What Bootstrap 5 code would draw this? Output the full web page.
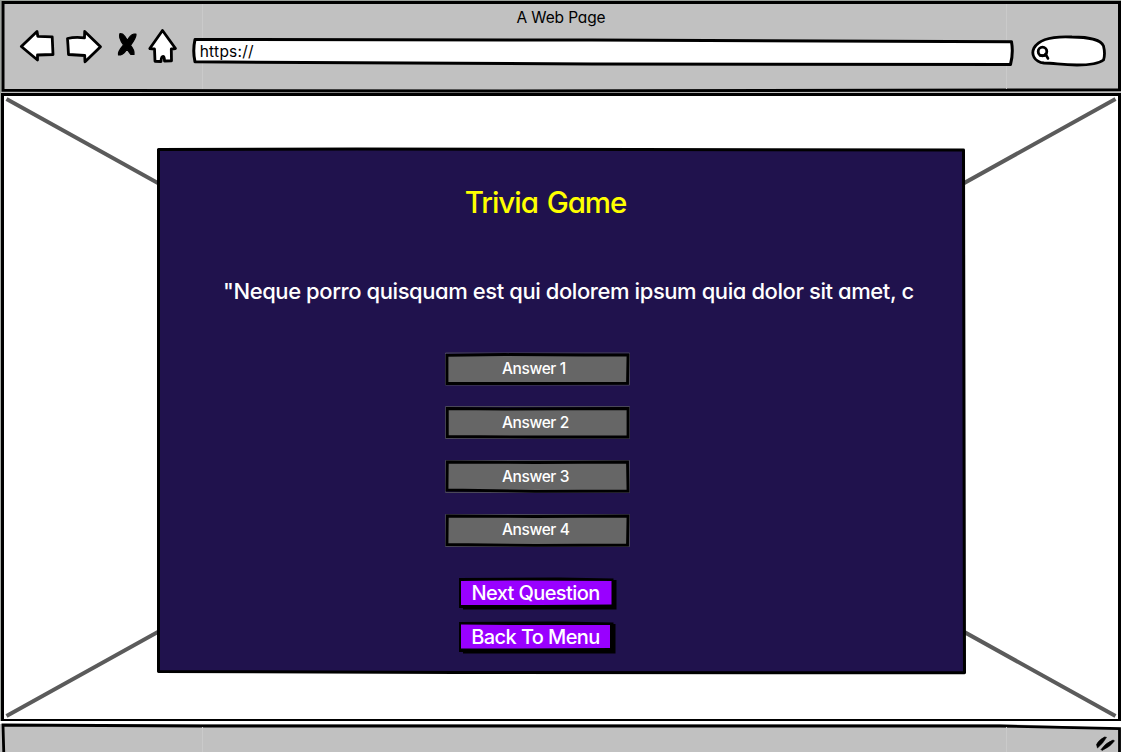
<!DOCTYPE html>
<html lang="en">
<head>
<meta charset="utf-8">
<meta name="viewport" content="width=device-width, initial-scale=1">
<title>A Web Page</title>
<link href="https://cdn.jsdelivr.net/npm/bootstrap@5.3.0/dist/css/bootstrap.min.css" rel="stylesheet">
<style>
  body { font-family: Inter, "Liberation Sans", sans-serif; font-feature-settings: "cv11"; color: #000; background: #fff; }
  .sketch { position: absolute; left: 0; top: 0; display: block; overflow: visible; }
  .chrome-bar { height: 93px; background: #c1c1c1; }
  .page-title { font-size: 15.5px; line-height: 20px; padding-top: 8px; padding-left: 1px; height: 28px; letter-spacing: -.15px; }
  .tool-row { height: 40px; padding: 0 13px 0 19px; }
  .address { width: 822px; height: 30px; margin: 9px 0 0 13px; }
  .address span { font-size: 15.5px; line-height: 29px; padding-left: 8px; letter-spacing: .25px; }
  .search-box { width: 78px; height: 34px; margin: 6px 0 0 18px; }
  .canvas { height: 628px; }
  .status-bar { height: 31px; background: #c1c1c1; }
  .game { width: 809px; height: 527px; margin-left: 157px; margin-top: 54px; }
  .game-inner { width: 761px; }
  .game-title { font-size: 29.5px; line-height: 36px; color: #ff0; margin: 37px 0 0 16px; letter-spacing: -1.05px; word-spacing: 2px; font-weight: 500; }
  .question { font-size: 22px; line-height: 28px; color: #fff; margin: 57px 0 0 66px; align-self: flex-start; white-space: nowrap; font-weight: 500; letter-spacing: -.42px; }
  .answers { margin-top: 47px; gap: 21px; }
  .answer { width: 185px; height: 33px; line-height: 31px; color: #fff; font-size: 15.5px; letter-spacing: -.4px; font-weight: 500; padding: 0 0 0 57px; text-align: left; border: 0; background: none; }
  .actions { margin-top: 31px; gap: 12px; }
  .action { width: 158px; height: 32px; line-height: 28px; color: #fff; font-size: 20px; letter-spacing: -.6px; font-weight: 500; padding: 0 4px 2px 0; border: 0; background: none; }
  .label { position: relative; }
</style>
</head>
<body>
<div class="d-flex flex-column vh-100 overflow-hidden">
  <header class="chrome-bar position-relative flex-shrink-0">
    <svg class="sketch" width="1121" height="93" fill="none" stroke="#000">
      <path d="M0 .5H1121M.5 0V93" stroke="#9da39d"/>
      <path d="M3 2.500L60 2.500L560 2.500L1119.500 2.500V89.800L500 91L3 90.300Z" stroke-width="3"/>
      <path d="M202.500 4V89M1006.500 4V89" stroke="#cacaca"/>
    </svg>
    <div class="page-title label text-center">A Web Page</div>
    <div class="tool-row d-flex align-items-start label">
      <svg width="160" height="40" fill="#fff" stroke="#000" stroke-width="2.800" stroke-linejoin="round" stroke-linecap="round">
        <path d="M2.300 18.500L18 3.500L18.800 8.300L33.200 8.800L34 26.500L18.500 27L18.500 32Z"/>
        <path d="M48.500 10.500Q56 8.500 65.500 9.800L65.700 3.500L81.500 18.800L66 33.700L65.700 27.500L49.500 26.500Q49 17 48.500 10.500Z"/>
        <path d="M143.500 2.500L130.800 20.500L135.500 21L136 33.300L142 33.500Q142.300 28.500 144 28.500Q145.500 28.500 145.500 33L152.500 32.800L152.300 21L156.500 20.500Z"/>
        <path d="M101 5.500L103.500 6Q106 8 108.500 12.500Q111 7 115 6H117Q117.500 9 111.500 17.500Q115.500 22 115 26.500H112Q110.500 25 108 21Q105 26 101.500 27H99.500Q98.500 24 104.500 17Q99 9 101 5.500Z" fill="#000" stroke-width="1.200"/>
      </svg>
      <div class="address position-relative">
        <svg class="sketch" width="822" height="30"><path d="M3 2.500L400 3L819.500 4.700Q821.500 16 818.500 27.500L400 27L3 24.800Q.5 14 3 2.500Z" fill="#fff" stroke="#000" stroke-width="3" stroke-linejoin="round"/></svg>
        <span class="label d-block">https://</span>
      </div>
      <svg class="search-box" fill="#fff" stroke="#000" stroke-width="2.800">
        <path d="M14 29C4 28 1 20 4 14C9 5 22 2 42 3C58 3 71 6 73.500 12Q75.500 20 73.500 26Q67 31 47 31C31 31 25 29 14 29Z"/>
        <circle cx="12.500" cy="17.500" r="4.300" stroke-width="2.800"/><path d="M15.500 20L18 24.500M10 21.500H15" stroke-width="2.600" stroke-linecap="round"/>
      </svg>
    </div>
  </header>

  <main class="canvas position-relative flex-shrink-0">
    <svg class="sketch" width="1121" height="628" fill="none">
      <path d="M0 .5H1121M.5 0V628M0 627.500H1121" stroke="#a5aaa5"/>
      <path d="M6.500 6L561 314L1115.500 6M6.500 623L561 315L1115.500 623" stroke="#5b5b5b" stroke-width="4"/>
      <path d="M2.500 1.500H1119.500V627.500H2.500Z" stroke="#000" stroke-width="3"/>
    </svg>
    <section class="d-flex">
      <div class="game position-relative">
        <svg class="sketch" width="809" height="527"><path d="M1.500 2.500L200 2L806.500 3L807.500 525.800L300 525.500L1.500 524.500Z" fill="#20124d" stroke="#000" stroke-width="3" stroke-linejoin="round"/></svg>
        <div class="game-inner label d-flex flex-column align-items-center">
          <h1 class="game-title">Trivia Game</h1>
          <div class="question">"Neque porro quisquam est qui dolorem ipsum quia dolor sit amet, c</div>
          <div class="answers d-flex flex-column">
            <button class="answer position-relative"><svg class="sketch" width="185" height="33"><path d="M.5 1H184.500V33H.5Z" fill="none" stroke="#4a4858"/><path d="M2 3.300L60 2.500L140 3L183 3L182.500 31.300L90 31.500L2 31.500Z" fill="#666" stroke="#000" stroke-width="2.800"/></svg><span class="label">Answer 1</span></button>
            <button class="answer position-relative"><svg class="sketch" width="185" height="33"><path d="M.5 .5H184.500V32.500H.5Z" fill="none" stroke="#4a4858"/><path d="M2.300 2.500L60 3L183 2.500V31L90 31L2.300 30.500Z" fill="#666" stroke="#000" stroke-width="2.800"/></svg><span class="label">Answer 2</span></button>
            <button class="answer position-relative"><svg class="sketch" width="185" height="33"><path d="M.5 .5H184.500V32.500H.5Z" fill="none" stroke="#4a4858"/><path d="M2.300 2L90 2.500L182.500 2L183 31L90 31.300L2 30Z" fill="#666" stroke="#000" stroke-width="2.800"/></svg><span class="label">Answer 3</span></button>
            <button class="answer position-relative pb-1"><svg class="sketch" width="185" height="33"><path d="M.5 .5H184.500V32.500H.5Z" fill="none" stroke="#4a4858"/><path d="M2.300 2L90 2.500L183 2L182.500 31L90 31.300L2 30.500Z" fill="#666" stroke="#000" stroke-width="2.800"/></svg><span class="label">Answer 4</span></button>
          </div>
          <div class="actions d-flex flex-column">
            <button class="action position-relative"><svg class="sketch" width="158" height="32"><path d="M0 0L100 -.5L154.500 .5V2H157.500V31.500H4V30H0Z"/><path d="M2 3L60 2.500L152.500 3V26.500L80 27L2 27Z" fill="#90f"/></svg><span class="label">Next Question</span></button>
            <button class="action position-relative"><svg class="sketch" width="158" height="32"><path d="M0 0L100 -.5L154.500 .5V2H156.500V31.500H4V30H0Z"/><path d="M2 2.500L60 3L151 3V26L60 26.500L2 26.500Z" fill="#90f"/></svg><span class="label">Back To Menu</span></button>
          </div>
        </div>
      </div>
    </section>
  </main>

  <footer class="status-bar position-relative flex-shrink-0">
    <svg class="sketch" width="1121" height="31">
      <path d="M0 0H1121V7L1000 3H0Z" fill="#fff"/>
      <path d="M4 40L3 4L200 5H1000L1119.500 7.500V40" fill="none" stroke="#000" stroke-width="2.800"/>
      <path d="M202.500 6V31M1006.500 6V31" stroke="#cacaca"/>
      <path d="M1096.500 23.500Q1098.500 19 1104.500 16L1106.500 16.300Q1103.500 22 1097.500 27ZM1101 28.500Q1106 21.500 1113 19L1114.500 19.800Q1111 25.500 1102 29.500Z" fill="#000" stroke="#000" stroke-width=".6"/>
    </svg>
  </footer>
</div>
<script src="https://cdn.jsdelivr.net/npm/bootstrap@5.3.0/dist/js/bootstrap.bundle.min.js"></script>
</body>
</html>
